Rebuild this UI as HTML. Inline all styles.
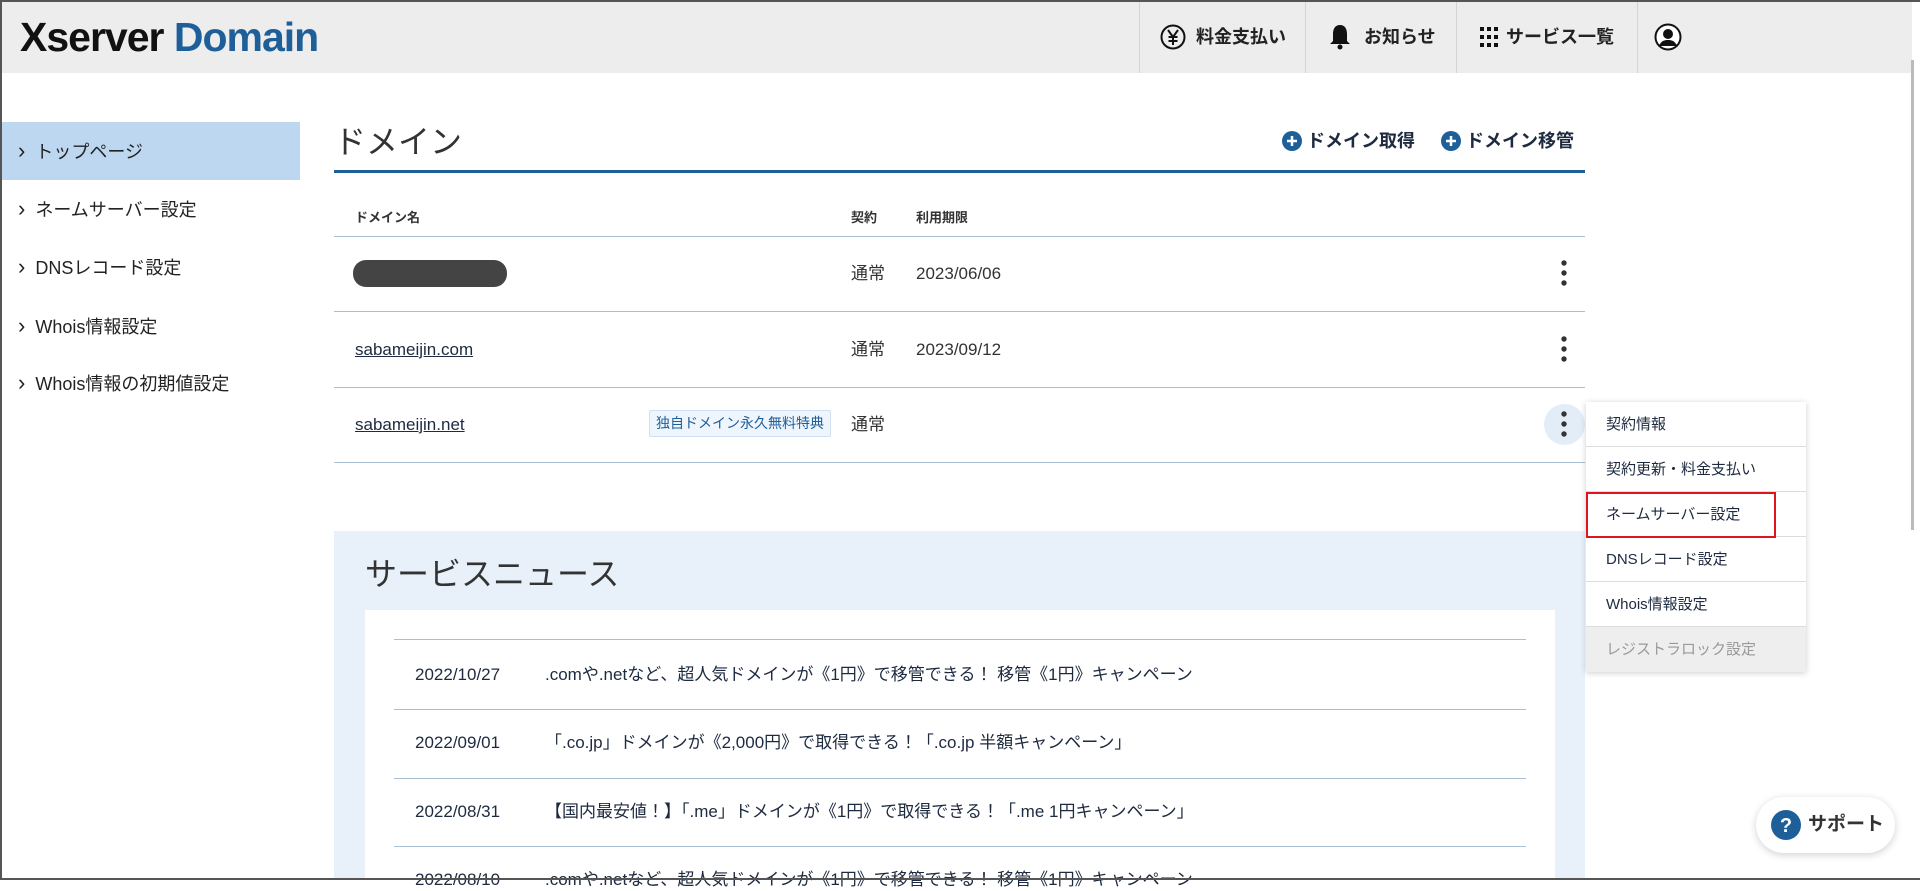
<!DOCTYPE html>
<html><head><meta charset="utf-8"><style>
*{margin:0;padding:0;box-sizing:border-box}
body{width:1920px;height:880px;overflow:hidden;background:#fff;font-family:"Liberation Sans","Noto Sans CJK JP",sans-serif;color:#1d2a3f;position:relative;line-height:1.25}
.a{position:absolute;white-space:nowrap}
.frame{position:absolute;left:0;top:0;width:1920px;height:880px;border:2px solid #555;border-right:none;z-index:50;pointer-events:none}
.hdr{position:absolute;left:0;top:0;width:1912px;height:73px;background:#ededed}
.sep{position:absolute;top:0;width:1px;height:73px;background:#d4d4d4}
.nav{font-size:18px;font-weight:bold;color:#222;top:26px}
.side{left:0;width:300px;height:58px;font-size:18px;color:#222;padding-left:18px;line-height:58px}
.side::before{content:"›";margin-right:10px;font-size:22px}
.hl{position:absolute;height:1px;background:#a9bfd4}
.td{font-size:17px;color:#333;line-height:22px}
.dd{position:absolute;left:1586px;top:402px;width:220px;height:270px;background:#fff;box-shadow:0 1px 6px rgba(0,0,0,.2);z-index:10}
.dd div{height:45px;line-height:45px;padding-left:20px;font-size:15px;color:#1d2a3f;border-bottom:1px solid #dcdcdc}
.nw{font-size:17px;color:#1d2a3f;line-height:22px}
</style></head><body>
<div class="hdr"></div>
<div class="a" style="left:20px;top:12px;font-size:41px;font-weight:bold;letter-spacing:-1px;color:#111">Xserver <span style="color:#1e5f9a">Domain</span></div>
<div class="sep" style="left:1139px"></div><div class="sep" style="left:1305px"></div><div class="sep" style="left:1456px"></div><div class="sep" style="left:1637px"></div>
<svg class="a" style="left:1160px;top:24px" width="26" height="26" viewBox="0 0 26 26"><circle cx="13" cy="13" r="11.5" fill="none" stroke="#111" stroke-width="2"/><path d="M8 6l5 7 5-7M13 13v8M8.5 13h9M8.5 17h9" fill="none" stroke="#111" stroke-width="2"/></svg>
<div class="a nav" style="left:1196px">料金支払い</div>
<svg class="a" style="left:1329px;top:23px" width="22" height="28" viewBox="0 0 22 28"><path d="M11 2c-5 0-7 4-7 9v7l-3 3h20l-3-3v-7c0-5-2-9-7-9z" fill="#111"/><circle cx="11" cy="24" r="2.5" fill="#111"/></svg>
<div class="a nav" style="left:1364px">お知らせ</div>
<svg class="a" style="left:1480px;top:27px" width="18" height="20" viewBox="0 0 18 20"><g fill="#111"><rect x="0" y="0" width="4" height="4"/><rect x="7" y="0" width="4" height="4"/><rect x="14" y="0" width="4" height="4"/><rect x="0" y="8" width="4" height="4"/><rect x="7" y="8" width="4" height="4"/><rect x="14" y="8" width="4" height="4"/><rect x="0" y="16" width="4" height="4"/><rect x="7" y="16" width="4" height="4"/><rect x="14" y="16" width="4" height="4"/></g></svg>
<div class="a nav" style="left:1506px">サービス一覧</div>
<svg class="a" style="left:1654px;top:23px" width="28" height="28" viewBox="0 0 28 28"><circle cx="14" cy="14" r="12.5" fill="#fff" stroke="#111" stroke-width="2"/><circle cx="14" cy="11" r="5" fill="#111"/><path d="M5 23c2-5 5-6 9-6s7 1 9 6" fill="#111"/></svg>
<div class="a" style="left:1911px;top:60px;width:3px;height:470px;background:#bbb"></div>

<div class="a side" style="top:122px;background:#bcd7ef">トップページ</div>
<div class="a side" style="top:180px">ネームサーバー設定</div>
<div class="a side" style="top:238px">DNSレコード設定</div>
<div class="a side" style="top:297px">Whois情報設定</div>
<div class="a side" style="top:354px">Whois情報の初期値設定</div>

<div class="a" style="left:334px;top:122px;font-size:32px;color:#333">ドメイン</div>
<div class="a" style="left:334px;top:170px;width:1251px;height:3px;background:#1e5f9a"></div>
<svg class="a" style="left:1282px;top:131px" width="20" height="20"><circle cx="10" cy="10" r="10" fill="#1e5f9a"/><path d="M10 5v10M5 10h10" stroke="#fff" stroke-width="2.5"/></svg>
<div class="a" style="left:1307px;top:130px;font-size:18px;font-weight:bold;color:#1d2a3f">ドメイン取得</div>
<svg class="a" style="left:1441px;top:131px" width="20" height="20"><circle cx="10" cy="10" r="10" fill="#1e5f9a"/><path d="M10 5v10M5 10h10" stroke="#fff" stroke-width="2.5"/></svg>
<div class="a" style="left:1466px;top:130px;font-size:18px;font-weight:bold;color:#1d2a3f">ドメイン移管</div>

<div class="a" style="left:355px;top:210px;font-size:13px;font-weight:bold;color:#333">ドメイン名</div>
<div class="a" style="left:851px;top:210px;font-size:13px;font-weight:bold;color:#333">契約</div>
<div class="a" style="left:916px;top:210px;font-size:13px;font-weight:bold;color:#333">利用期限</div>
<div class="hl" style="left:334px;top:236px;width:1251px"></div>
<div class="hl" style="left:334px;top:311px;width:1251px"></div>
<div class="hl" style="left:334px;top:387px;width:1251px"></div>
<div class="hl" style="left:334px;top:462px;width:1251px"></div>

<div class="a" style="left:353px;top:260px;width:154px;height:27px;border-radius:13px;background:#444"></div>
<div class="a td" style="left:851px;top:263px">通常</div><div class="a td" style="left:916px;top:263px">2023/06/06</div>
<div class="a td" style="left:355px;top:339px;text-decoration:underline;color:#1d2a3f">sabameijin.com</div>
<div class="a td" style="left:851px;top:339px">通常</div><div class="a td" style="left:916px;top:339px">2023/09/12</div>
<div class="a td" style="left:355px;top:414px;text-decoration:underline;color:#1d2a3f">sabameijin.net</div>
<div class="a" style="left:649px;top:410px;width:182px;height:27px;background:#eef5fc;border:1px solid #cfe0f0;border-radius:2px;font-size:14px;color:#1e5f9a;line-height:25px;text-align:center">独自ドメイン永久無料特典</div>
<div class="a td" style="left:851px;top:414px">通常</div>

<svg class="a" style="left:1558px;top:258px" width="12" height="30"><circle cx="6" cy="5" r="2.7" fill="#333"/><circle cx="6" cy="15" r="2.7" fill="#333"/><circle cx="6" cy="25" r="2.7" fill="#333"/></svg>
<svg class="a" style="left:1558px;top:334px" width="12" height="30"><circle cx="6" cy="5" r="2.7" fill="#333"/><circle cx="6" cy="15" r="2.7" fill="#333"/><circle cx="6" cy="25" r="2.7" fill="#333"/></svg>
<div class="a" style="left:1544px;top:404px;width:41px;height:41px;border-radius:50%;background:#e3edf8"></div>
<svg class="a" style="left:1558px;top:409px" width="12" height="30"><circle cx="6" cy="5" r="2.7" fill="#333"/><circle cx="6" cy="15" r="2.7" fill="#333"/><circle cx="6" cy="25" r="2.7" fill="#333"/></svg>

<div class="dd">
<div>契約情報</div><div>契約更新・料金支払い</div><div>ネームサーバー設定</div><div>DNSレコード設定</div><div>Whois情報設定</div><div style="background:#eee;color:#999;border:none">レジストラロック設定</div>
</div>
<div class="a" style="left:1586px;top:492px;width:190px;height:46px;border:2px solid #e0141e;z-index:11"></div>

<div class="a" style="left:334px;top:531px;width:1251px;height:349px;background:#e8f0fa"></div>
<div class="a" style="left:365px;top:554px;font-size:32px;color:#333">サービスニュース</div>
<div class="a" style="left:365px;top:610px;width:1190px;height:270px;background:#fff"></div>
<div class="hl" style="left:394px;top:639px;width:1132px"></div>
<div class="hl" style="left:394px;top:709px;width:1132px"></div>
<div class="hl" style="left:394px;top:778px;width:1132px"></div>
<div class="hl" style="left:394px;top:846px;width:1132px"></div>
<div class="a nw" style="left:415px;top:664px">2022/10/27</div><div class="a nw" style="left:545px;top:664px">.comや.netなど、超人気ドメインが《1円》で移管できる！ 移管《1円》キャンペーン</div>
<div class="a nw" style="left:415px;top:732px">2022/09/01</div><div class="a nw" style="left:545px;top:732px">「.co.jp」ドメインが《2,000円》で取得できる！「.co.jp 半額キャンペーン」</div>
<div class="a nw" style="left:415px;top:801px">2022/08/31</div><div class="a nw" style="left:545px;top:801px">【国内最安値！】「.me」ドメインが《1円》で取得できる！「.me 1円キャンペーン」</div>
<div class="a nw" style="left:415px;top:869px">2022/08/10</div><div class="a nw" style="left:545px;top:869px">.comや.netなど、超人気ドメインが《1円》で移管できる！ 移管《1円》キャンペーン</div>

<div class="a" style="left:1756px;top:797px;width:139px;height:56px;border-radius:28px;background:#fff;box-shadow:0 2px 8px rgba(0,0,0,.18);z-index:12"></div>
<svg class="a" style="left:1771px;top:810px;z-index:13" width="30" height="30"><circle cx="15" cy="15" r="15" fill="#1e5f9a"/><text x="15" y="22" text-anchor="middle" font-family="Liberation Sans" font-weight="bold" font-size="20" fill="#fff">?</text></svg>
<div class="a" style="left:1808px;top:813px;font-size:19px;font-weight:bold;color:#333;z-index:13">サポート</div>
<div class="frame"></div>
</body></html>
